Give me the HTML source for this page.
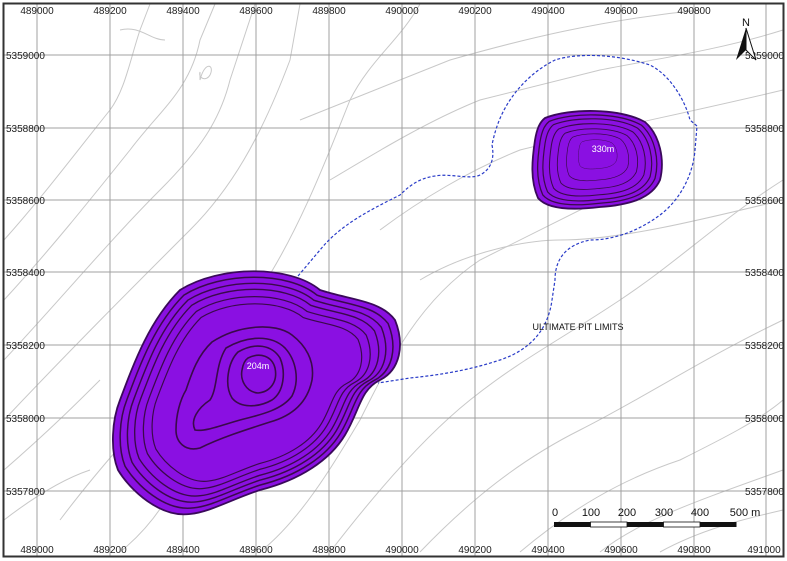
<!DOCTYPE html>
<html><head><style>
html,body{margin:0;padding:0;background:#fff;}
svg{display:block;font-family:"Liberation Sans",sans-serif;}
</style></head><body>
<svg width="787" height="561" viewBox="0 0 787 561">
<rect x="0" y="0" width="787" height="561" fill="#fff"/>
<g fill="none" stroke="#c8c8c8" stroke-width="1">
<path d="M4 240 C40 200 70 160 110 110 C125 90 130 60 140 30 L150 4"/>
<path d="M4 300 C50 250 90 200 130 150 C160 110 190 90 200 40 L215 4"/>
<path d="M4 360 C60 300 110 240 160 190 C200 150 220 120 230 80 L255 4"/>
<path d="M4 420 C70 350 130 290 190 230 C230 190 260 140 290 60 L300 4"/>
<path d="M60 520 C120 440 200 360 260 290 C300 230 330 150 350 100 C370 60 400 40 420 4"/>
<path d="M120 552 C160 520 180 480 200 430"/>
<path d="M260 552 C300 520 330 470 360 420 C390 360 420 300 480 260 C540 230 560 220 600 200"/>
<path d="M330 552 C370 500 420 440 470 400 C520 360 560 340 620 300 C680 260 720 220 783 180"/>
<path d="M420 552 C470 500 520 460 580 430 C640 400 700 360 783 320"/>
<path d="M520 552 C570 510 620 480 680 460 C720 440 760 420 783 400"/>
<path d="M600 552 C640 520 700 500 783 470"/>
<path d="M660 552 C700 530 740 520 783 510"/>
<path d="M300 120 C350 100 400 80 450 60 C520 40 600 20 700 10"/>
<path d="M330 180 C380 150 430 120 480 100 C520 90 560 80 600 70 C650 60 720 50 783 30"/>
<path d="M380 230 C420 200 470 170 520 150 C600 130 700 110 783 90"/>
<path d="M420 280 C470 250 530 240 560 240 C620 240 700 220 783 200"/>
<path d="M200 80 C205 60 215 65 210 75 C206 82 198 78 200 72 Z"/>
<path d="M120 30 C140 25 150 40 165 40"/>
<path d="M4 470 C50 430 80 400 100 380"/>
<path d="M4 520 C30 500 60 480 90 470"/>
</g>
<g stroke="#a0a0a0" stroke-width="1">
<path d="M37 4V556M110 4V556M183 4V556M256 4V556M329 4V556M402 4V556M475 4V556M548 4V556M621 4V556M694 4V556M766 4V556"/>
<path d="M4 55H783M4 128H783M4 200H783M4 272H783M4 345H783M4 418H783M4 491H783"/>
</g>
<path d="M298 276 L320 250 C340 225 370 210 400 195 C410 185 420 178 435 176 C450 173 470 180 480 175 C490 170 495 160 492 145 C495 130 500 115 510 100 C520 85 535 70 555 60 C580 52 620 55 650 65 C670 75 685 100 690 120 L697 126 L695 150 C693 175 680 200 660 215 C640 230 615 240 590 240 C565 245 555 260 555 280 L552 300 C548 330 530 350 500 360 C470 370 440 375 410 378 L378 383" fill="none" stroke="#2a3cc8" stroke-width="1.2" stroke-dasharray="3,2"/>
<defs>
<path id="bp" d="M180 290 C220 265 290 265 320 290 C350 300 380 300 395 320 C405 345 400 370 380 380 C360 390 360 410 345 435 C330 460 300 480 260 490 C230 500 210 512 190 514 C160 518 130 490 118 470 C110 450 112 420 120 400 C135 360 150 320 180 290 Z"/>
<path id="sp" d="M545 118 C570 108 620 108 645 122 C660 135 665 160 660 180 C652 198 630 205 600 207 C575 210 548 210 538 198 C530 180 532 160 535 140 C537 128 540 122 545 118 Z"/>
</defs>
<use href="#bp" fill="#8a10e2" stroke="#3a0a5a" stroke-width="1.8"/>
<g fill="none" stroke="#3a0a4a" stroke-width="1.6">
<use href="#bp" transform="translate(258 392) scale(0.95) translate(-258 -392)"/>
<use href="#bp" transform="translate(258 392) scale(0.9) translate(-258 -392)"/>
<use href="#bp" transform="translate(258 392) scale(0.85) translate(-258 -392)"/>
<use href="#bp" transform="translate(258 392) scale(0.79) translate(-258 -392)"/>
<use href="#bp" transform="translate(258 392) scale(0.73) translate(-258 -392)"/>
<path d="M212 342 C238 325 275 322 292 335 C305 345 315 360 312 380 C308 400 295 415 270 422 C245 430 220 438 200 448 C185 452 176 442 176 430 C176 415 180 400 186 390 C192 372 198 355 212 342 Z"/>
<path d="M226 348 C248 335 272 335 285 348 C296 360 300 380 292 396 C282 410 260 415 240 420 C222 425 205 432 195 430 C190 420 198 408 210 400 C218 388 215 365 226 348 Z"/>
<path d="M238 352 C255 342 272 345 280 358 C286 372 284 392 272 400 C258 408 240 408 232 398 C224 385 228 362 238 352 Z"/>
<path d="M248 358 C260 352 272 356 275 368 C278 382 270 392 258 393 C246 392 240 380 242 370 C243 364 245 360 248 358 Z"/>
</g>
<text x="258" y="369" font-size="9" fill="#fff" text-anchor="middle">204m</text>
<use href="#sp" fill="#8a10e2" stroke="#3a0a5a" stroke-width="1.8"/>
<g fill="none" stroke="#3a0a4a" stroke-width="1.4">
<use href="#sp" transform="translate(598 160) scale(0.92) translate(-598 -160)"/>
<use href="#sp" transform="translate(598 160) scale(0.84) translate(-598 -160)"/>
<use href="#sp" transform="translate(598 160) scale(0.74) translate(-598 -160)"/>
<use href="#sp" transform="translate(598 158) scale(0.62) translate(-598 -158)"/>
<use href="#sp" transform="translate(598 155) scale(0.48) translate(-598 -155)"/>
<use href="#sp" transform="translate(598 152) scale(0.3) translate(-598 -152)"/>
</g>
<text x="603" y="152" font-size="9" fill="#fff" text-anchor="middle">330m</text>
<text x="578" y="330" font-size="9" fill="#111" text-anchor="middle">ULTIMATE PIT LIMITS</text>
<rect x="3.5" y="3.5" width="780" height="553" fill="none" stroke="#333" stroke-width="2"/>
<g font-size="10" fill="#222" text-anchor="middle">
<text x="37" y="14">489000</text><text x="110" y="14">489200</text><text x="183" y="14">489400</text><text x="256" y="14">489600</text><text x="329" y="14">489800</text><text x="402" y="14">490000</text><text x="475" y="14">490200</text><text x="548" y="14">490400</text><text x="621" y="14">490600</text><text x="694" y="14">490800</text>
<text x="37" y="553">489000</text><text x="110" y="553">489200</text><text x="183" y="553">489400</text><text x="256" y="553">489600</text><text x="329" y="553">489800</text><text x="402" y="553">490000</text><text x="475" y="553">490200</text><text x="548" y="553">490400</text><text x="621" y="553">490600</text><text x="694" y="553">490800</text><text x="764" y="553">491000</text>
</g>
<g font-size="10" fill="#222">
<text x="6" y="59">5359000</text><text x="6" y="132">5358800</text><text x="6" y="204">5358600</text><text x="6" y="276">5358400</text><text x="6" y="349">5358200</text><text x="6" y="422">5358000</text><text x="6" y="495">5357800</text>
<text x="745" y="59">5359000</text><text x="745" y="132">5358800</text><text x="745" y="204">5358600</text><text x="745" y="276">5358400</text><text x="745" y="349">5358200</text><text x="745" y="422">5358000</text><text x="745" y="495">5357800</text>
</g>
<text x="746" y="26" font-size="11" fill="#111" text-anchor="middle">N</text>
<path d="M746 28 L736 60 L746 50 Z" fill="#111"/>
<path d="M746 28 L756 60 L746 50 Z" fill="#fff" stroke="#111" stroke-width="1"/>
<g>
<rect x="554" y="522" width="36.5" height="5" fill="#111"/>
<rect x="590.5" y="522" width="36.5" height="5" fill="#fff" stroke="#111" stroke-width="0.8"/>
<rect x="627" y="522" width="36.5" height="5" fill="#111"/>
<rect x="663.5" y="522" width="36.5" height="5" fill="#fff" stroke="#111" stroke-width="0.8"/>
<rect x="700" y="522" width="36.5" height="5" fill="#111"/>
</g>
<g font-size="11" fill="#111" text-anchor="middle">
<text x="555" y="516">0</text><text x="591" y="516">100</text><text x="627" y="516">200</text><text x="664" y="516">300</text><text x="700" y="516">400</text><text x="745" y="516">500 m</text>
</g>
</svg>
</body></html>
